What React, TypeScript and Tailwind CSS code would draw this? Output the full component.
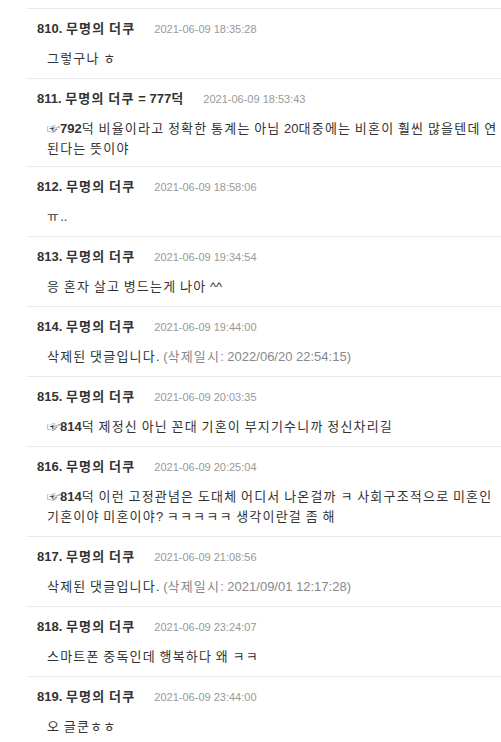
import type { ReactNode } from 'react';

// Hangul in Noto CJK runs ~0.92em; the reference (Malgun Gothic) is a full em,
// so Hangul runs get a little tracking while Latin/digits stay as-is.
const HANGUL = /([\u3131-\u318E\uAC00-\uD7A3]+)/;

function K({ children }: { children: string }) {
  return (
    <>
      {children.split(HANGUL).map((part, i) =>
        i % 2 === 1 ? (
          <span key={i} className="tracking-[1.2px]">
            {part}
          </span>
        ) : (
          part
        ),
      )}
    </>
  );
}

type Comment = {
  no: number;
  name: string;
  date: string;
  lines: ReactNode[];
  tight?: boolean;
};

const Ref = ({ n }: { n: number }) => <span className="font-bold">☞{n}</span>;

const Deleted = ({ at }: { at: string }) => (
  <>
    <K>삭제된 댓글입니다. </K>
    <span className="text-[#888]">
      <K>{`(삭제일시: ${at})`}</K>
    </span>
  </>
);

const COMMENTS: Comment[] = [
  { no: 810, name: '무명의 더쿠', date: '2021-06-09 18:35:28', lines: [<K>그렇구나 ㅎ</K>] },
  {
    no: 811,
    name: '무명의 더쿠 = 777덕',
    date: '2021-06-09 18:53:43',
    tight: true,
    lines: [
      <>
        <Ref n={792} />
        <K>덕 비율이라고 정확한 통계는 아님 20대중에는 비혼이 훨씬 많을텐데 연</K>
      </>,
      <K>된다는 뜻이야</K>,
    ],
  },
  { no: 812, name: '무명의 더쿠', date: '2021-06-09 18:58:06', lines: [<K>ㅠ..</K>] },
  { no: 813, name: '무명의 더쿠', date: '2021-06-09 19:34:54', lines: [<K>응 혼자 살고 병드는게 나아 ^^</K>] },
  { no: 814, name: '무명의 더쿠', date: '2021-06-09 19:44:00', lines: [<Deleted at="2022/06/20 22:54:15" />] },
  {
    no: 815,
    name: '무명의 더쿠',
    date: '2021-06-09 20:03:35',
    lines: [
      <>
        <Ref n={814} />
        <K>덕 제정신 아닌 꼰대 기혼이 부지기수니까 정신차리길</K>
      </>,
    ],
  },
  {
    no: 816,
    name: '무명의 더쿠',
    date: '2021-06-09 20:25:04',
    lines: [
      <>
        <Ref n={814} />
        <K>덕 이런 고정관념은 도대체 어디서 나온걸까 ㅋ 사회구조적으로 미혼인</K>
      </>,
      <K>기혼이야 미혼이야? ㅋㅋㅋㅋㅋ 생각이란걸 좀 해</K>,
    ],
  },
  { no: 817, name: '무명의 더쿠', date: '2021-06-09 21:08:56', lines: [<Deleted at="2021/09/01 12:17:28" />] },
  { no: 818, name: '무명의 더쿠', date: '2021-06-09 23:24:07', lines: [<K>스마트폰 중독인데 행복하다 왜 ㅋㅋ</K>] },
  { no: 819, name: '무명의 더쿠', date: '2021-06-09 23:44:00', lines: [<K>오 글쿤ㅎㅎ</K>] },
];

function CommentRow({ c }: { c: Comment }) {
  return (
    <li className={`border-t border-[#e8e8e8] pt-[10px] ${c.tight ? 'pb-[7px]' : 'pb-[9px]'}`}>
      <div className="flex h-5 items-baseline pl-[10px] leading-5">
        <span className="font-bold text-[#333]">
          <K>{`${c.no}. ${c.name}`}</K>
        </span>
        <span className="ml-[19px] text-[11px] text-[#999]">{c.date}</span>
      </div>
      <div className="mt-[10px] pl-[20px] leading-5 text-[#333]">
        {c.lines.map((l, i) => (
          <div key={i} className="whitespace-nowrap">
            {l}
          </div>
        ))}
      </div>
    </li>
  );
}

export default function App() {
  return (
    <div className="h-[742px] w-[501px] overflow-hidden bg-white pt-2 font-['Liberation_Sans','Noto_Sans_CJK_KR',sans-serif] text-[13px]">
      <ul className="ml-[27px]">
        {COMMENTS.map((c) => (
          <CommentRow key={c.no} c={c} />
        ))}
      </ul>
    </div>
  );
}
